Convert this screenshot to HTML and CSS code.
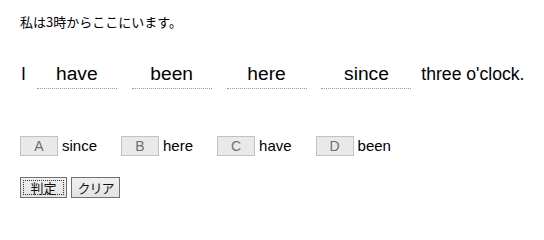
FILE: index.html
```html
<!DOCTYPE html>
<html lang="ja">
<head>
<meta charset="utf-8">
<title>並べ替え問題</title>
<link rel="stylesheet" href="styles.css">
</head>
<body>
<div class="page">
  <p class="prompt">私は3時からここにいます。</p>
  <p class="sentence">I <span class="blank">have</span> <span class="blank">been</span> <span class="blank">here</span> <span class="blank blank-wide">since</span> three o'clock.</p>
  <div class="choices">
    <div class="choice"><span class="key">A</span><span class="word">since</span></div>
    <div class="choice"><span class="key">B</span><span class="word">here</span></div>
    <div class="choice"><span class="key">C</span><span class="word">have</span></div>
    <div class="choice"><span class="key">D</span><span class="word">been</span></div>
  </div>
  <div class="actions">
    <button class="btn btn-judge" type="button">判定</button>
    <button class="btn btn-clear" type="button">クリア</button>
  </div>
</div>
</body>
</html>
```

FILE: styles.css
```css
html, body {
  margin: 0;
  padding: 0;
  background: #ffffff;
}

.page {
  padding: 14px 20px 0 20px;
  font-family: "Liberation Sans", Arial, "Noto Sans CJK JP", sans-serif;
  color: #000000;
}

.prompt {
  margin: 0;
  font-family: "Noto Sans CJK JP", sans-serif;
  font-size: 13px;
  line-height: 16px;
}

.sentence {
  margin: 31px 0 0 1px;
  font-size: 17.6px;
  line-height: 26px;
  white-space: nowrap;
}

.blank {
  display: inline-block;
  width: 80px;
  margin: 0 5px;
  padding-bottom: 3px;
  border-bottom: 1px dotted #9a9a9a;
  text-align: center;
  font-size: 19.2px;
  line-height: 22px;
}

.blank:first-child {
  margin-left: 6px;
}

.blank-wide {
  width: 90px;
}

.choices {
  display: flex;
  align-items: center;
  margin-top: 47px;
}

.choice {
  display: flex;
  align-items: center;
  margin-right: 24px;
}

.key {
  box-sizing: border-box;
  width: 38px;
  height: 20px;
  border: 1px solid #c2c2c2;
  background: #e9e9e9;
  color: #6f6f6f;
  font-size: 14px;
  line-height: 18px;
  text-align: center;
}

.word {
  margin-left: 4px;
  font-size: 15px;
  line-height: 18px;
}

.actions {
  display: flex;
  gap: 4px;
  margin-top: 21px;
}

.btn {
  box-sizing: border-box;
  height: 21px;
  padding: 0;
  border: 1px solid #707070;
  border-radius: 0;
  background: linear-gradient(#f0f0f0, #e3e3e3);
  color: #111111;
  font-family: "Noto Sans CJK JP", sans-serif;
  font-size: 13px;
  line-height: 17px;
  text-align: center;
}

.btn-judge {
  width: 47px;
  outline: 1px dotted #333333;
  outline-offset: -4px;
}

.btn-clear {
  width: 49px;
  letter-spacing: -1px;
}
```
